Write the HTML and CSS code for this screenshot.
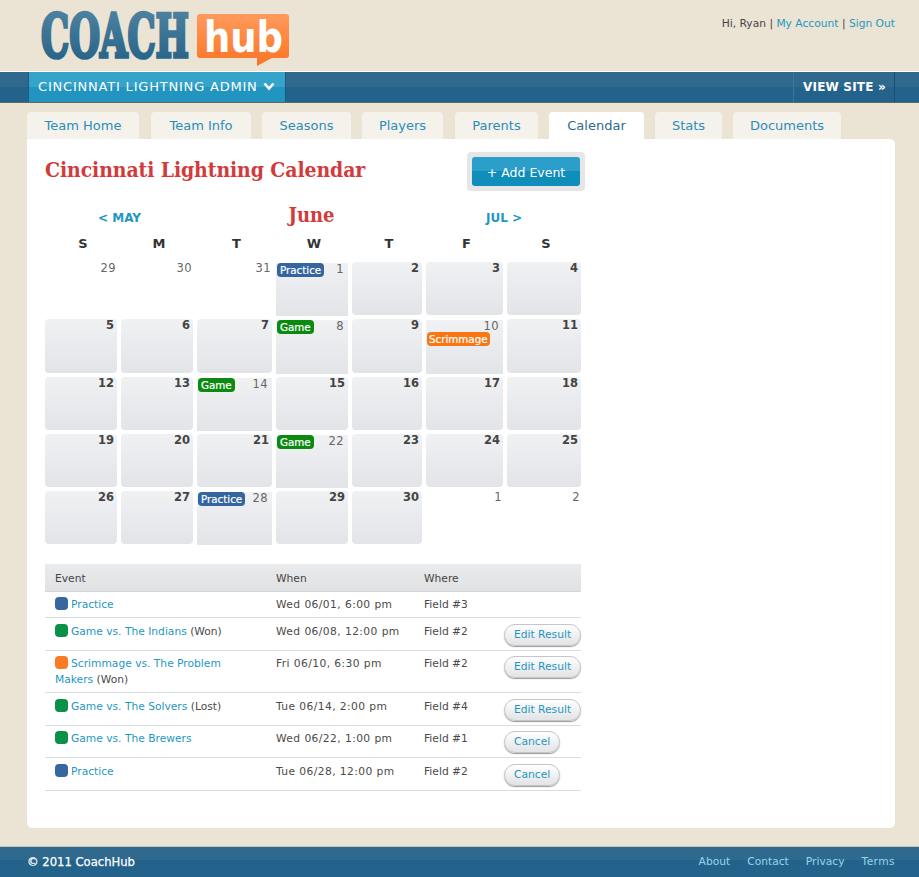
FILE: index.html
```html
<!DOCTYPE html>
<html lang="en">
<head>
<meta charset="utf-8">
<title>Cincinnati Lightning Calendar - CoachHub</title>
<link rel="stylesheet" href="styles.css">
</head>
<body>
<header class="top">
  <a class="logo" href="#" aria-label="CoachHub">
    <svg width="252" height="56" viewBox="0 0 252 56">
      <defs>
        <linearGradient id="coachFill" x1="0" y1="0" x2="0" y2="1">
          <stop offset="0" stop-color="#5586a3"/>
          <stop offset="1" stop-color="#1f5f85"/>
        </linearGradient>
        <linearGradient id="hubFill" x1="0" y1="0" x2="0" y2="1">
          <stop offset="0" stop-color="#ff9a5c"/>
          <stop offset="1" stop-color="#fb7424"/>
        </linearGradient>
      </defs>
      <text class="logo-coach" transform="translate(1 43) scale(.6 1)" fill="url(#coachFill)" stroke="url(#coachFill)">COACH</text>
      <path fill="url(#hubFill)" d="M160 0h86a3 3 0 0 1 3 3v38a3 3 0 0 1-3 3h-14l-15 8v-8h-57a3 3 0 0 1-3-3V3a3 3 0 0 1 3-3z"/>
      <text class="logo-hub" transform="translate(164 38) scale(.88 1)">hub</text>
    </svg>
  </a>
  <div class="account">Hi, Ryan | <a href="#">My Account</a> | <a href="#">Sign Out</a></div>
</header>

<nav class="bar">
  <a class="team-select" href="#">CINCINNATI LIGHTNING ADMIN
    <svg class="chevron" width="12" height="9" viewBox="0 0 12 9"><path d="M1.5 1.5 6 6.5l4.5-5" fill="none" stroke="#fff" stroke-width="2.6"/></svg>
  </a>
  <a class="view-site" href="#">VIEW SITE »</a>
</nav>

<div class="tabs">
  <a class="tab tab-home" href="#">Team Home</a>
  <a class="tab tab-info" href="#">Team Info</a>
  <a class="tab tab-seasons" href="#">Seasons</a>
  <a class="tab tab-players" href="#">Players</a>
  <a class="tab tab-parents" href="#">Parents</a>
  <a class="tab tab-calendar active" href="#">Calendar</a>
  <a class="tab tab-stats" href="#">Stats</a>
  <a class="tab tab-docs" href="#">Documents</a>
</div>

<main class="panel">
  <div class="title-row">
    <h1>Cincinnati Lightning Calendar</h1>
    <div class="add-wrap"><a class="add" href="#">+ Add Event</a></div>
  </div>

  <div class="cal-grid month-row">
    <a class="month-link span2" href="#">&lt; MAY</a>
    <h2 class="span3">June</h2>
    <a class="month-link span2" href="#">JUL &gt;</a>
  </div>
  <div class="cal-grid dow-row">
    <span>S</span><span>M</span><span>T</span><span>W</span><span>T</span><span>F</span><span>S</span>
  </div>
  <div class="cal-grid days">
    <div class="day out">29</div>
    <div class="day out">30</div>
    <div class="day out">31</div>
    <div class="day event"><span class="num">1</span><span class="tag practice">Practice</span></div>
    <div class="day in">2</div>
    <div class="day in">3</div>
    <div class="day in">4</div>

    <div class="day in">5</div>
    <div class="day in">6</div>
    <div class="day in">7</div>
    <div class="day event"><span class="num">8</span><span class="tag game">Game</span></div>
    <div class="day in">9</div>
    <div class="day event"><span class="num">10</span><span class="tag scrim">Scrimmage</span></div>
    <div class="day in">11</div>

    <div class="day in">12</div>
    <div class="day in">13</div>
    <div class="day event"><span class="num">14</span><span class="tag game">Game</span></div>
    <div class="day in">15</div>
    <div class="day in">16</div>
    <div class="day in">17</div>
    <div class="day in">18</div>

    <div class="day in">19</div>
    <div class="day in">20</div>
    <div class="day in">21</div>
    <div class="day event"><span class="num">22</span><span class="tag game">Game</span></div>
    <div class="day in">23</div>
    <div class="day in">24</div>
    <div class="day in">25</div>

    <div class="day in">26</div>
    <div class="day in">27</div>
    <div class="day event"><span class="num">28</span><span class="tag practice">Practice</span></div>
    <div class="day in">29</div>
    <div class="day in">30</div>
    <div class="day out">1</div>
    <div class="day out">2</div>
  </div>

  <table class="events">
    <colgroup><col class="c-event"><col class="c-when"><col class="c-where"><col class="c-act"></colgroup>
    <thead>
      <tr><th>Event</th><th>When</th><th>Where</th><th></th></tr>
    </thead>
    <tbody>
      <tr><td><i class="dot blue"></i><a href="#">Practice</a></td><td>Wed 06/01, 6:00 pm</td><td>Field #3</td><td></td></tr>
      <tr><td><i class="dot green"></i><a href="#">Game vs. The Indians</a> (Won)</td><td>Wed 06/08, 12:00 pm</td><td>Field #2</td><td><a class="btn" href="#">Edit Result</a></td></tr>
      <tr><td><i class="dot orange"></i><a href="#">Scrimmage vs. The Problem Makers</a> (Won)</td><td>Fri 06/10, 6:30 pm</td><td>Field #2</td><td><a class="btn" href="#">Edit Result</a></td></tr>
      <tr><td><i class="dot green"></i><a href="#">Game vs. The Solvers</a> (Lost)</td><td>Tue 06/14, 2:00 pm</td><td>Field #4</td><td><a class="btn" href="#">Edit Result</a></td></tr>
      <tr><td><i class="dot green"></i><a href="#">Game vs. The Brewers</a></td><td>Wed 06/22, 1:00 pm</td><td>Field #1</td><td><a class="btn" href="#">Cancel</a></td></tr>
      <tr><td><i class="dot blue"></i><a href="#">Practice</a></td><td>Tue 06/28, 12:00 pm</td><td>Field #2</td><td><a class="btn" href="#">Cancel</a></td></tr>
    </tbody>
  </table>
</main>

<footer class="foot">
  <span class="copy">© 2011 CoachHub</span>
  <nav class="foot-links"><a href="#">About</a><a href="#">Contact</a><a href="#">Privacy</a><a href="#">Terms</a></nav>
</footer>
</body>
</html>
```
FILE: styles.css
```css
* { box-sizing: border-box; }
html, body { margin: 0; padding: 0; }
body {
  width: 919px;
  height: 877px;
  overflow: hidden;
  background: #ebe4d5;
  color: #4a4a4a;
  font-family: "DejaVu Sans", sans-serif;
  font-size: 10.7px;
}
a { color: #1f97c1; text-decoration: none; }

.top { height: 71px; display: flex; justify-content: space-between; padding: 14px 24px 0 40px; }
.logo { display: block; height: 56px; }
.logo svg { overflow: visible; }
.logo-coach { font-family: "DejaVu Serif", serif; font-weight: 700; font-size: 59px; stroke-width: 3.6px; }
.logo-hub { font-family: "DejaVu Sans", sans-serif; font-weight: 700; font-size: 42px; fill: #fff; }
.account { font-size: 10.7px; line-height: 18px; padding-top: 1px; color: #444; }

.bar {
  height: 32px;
  border-top: 1px solid #fff;
  border-bottom: 1px solid #5c6a66;
  background: linear-gradient(#2f6a8e 0, #2f6a8e 50%, #23628a 50%, #23628a 100%);
  display: flex;
  justify-content: space-between;
  padding: 0 24px 0 28px;
  font-size: 13px;
  line-height: 30px;
  letter-spacing: .8px;
}
.team-select {
  width: 258px;
  padding-left: 9px;
  color: #fff;
  background: linear-gradient(#36a3cb 0, #36a3cb 50%, #2194c0 50%, #2194c0 100%);
  border-left: 1px solid #1f5a7c;
  border-right: 1px solid #1f5a7c;
  white-space: nowrap;
}
.chevron { margin-left: 0; }
.view-site {
  width: 102px;
  padding-left: 9px;
  color: #fff;
  font-size: 12px;
  font-weight: 700;
  letter-spacing: .2px;
  border-left: 1px solid #3a7699;
  border-right: 1px solid #1d4f6e;
  white-space: nowrap;
}

.tabs { height: 36px; display: flex; padding: 9px 0 0 27px; }
.tab {
  height: 27px;
  background: #f5f2eb;
  border-radius: 4px 4px 0 0;
  text-align: center;
  font-size: 13px;
  line-height: 27px;
  color: #2a8dba;
  white-space: nowrap;
}
.tab-home { width: 112px; margin-right: 12px; }
.tab-info { width: 100px; margin-right: 11px; }
.tab-seasons { width: 89px; margin-right: 11px; }
.tab-players { width: 81px; margin-right: 12px; }
.tab-parents { width: 83px; margin-right: 11px; }
.tab-calendar { width: 95px; margin-right: 11px; }
.tab-stats { width: 67px; margin-right: 11px; }
.tab-docs { width: 108px; }
.tab.active { background: #fff; color: #2f6a8e; }

.panel {
  width: 868px;
  height: 689px;
  margin-left: 27px;
  background: #fff;
  border-radius: 0 5px 5px 5px;
  padding: 13px 0 0 18px;
}
.title-row { width: 540px; height: 39px; display: flex; justify-content: space-between; align-items: flex-start; }
h1 {
  margin: 0;
  padding-top: 4px;
  font-family: "DejaVu Serif Condensed", "DejaVu Serif", serif;
  font-weight: 700;
  font-size: 21px;
  line-height: 27px;
  letter-spacing: -.1px;
  color: #d23b3b;
  white-space: nowrap;
}
.add-wrap { background: #e6e6e6; border-radius: 4px; padding: 5px; height: 39px; }
.add {
  display: block;
  width: 108px;
  height: 29px;
  border-radius: 3px;
  background: linear-gradient(#2b9fc9 0, #2b9fc9 50%, #0f8dbb 50%, #0f8dbb 100%);
  color: #fff;
  text-align: center;
  font-size: 12.5px;
  line-height: 31px;
}

.cal-grid {
  width: 536px;
  display: grid;
  grid-template-columns: 72px 72px 75px 72px 70px 77px 74px;
  column-gap: 4px;
}
.month-row { height: 28px; margin-top: 10px; align-items: center; text-align: center; }
.span2 { grid-column: span 2; }
.span3 { grid-column: span 3; padding-left: 4px; }
.month-link { font-size: 12px; font-weight: 700; padding-top: 6px; padding-left: 1px; }
h2 {
  margin: 0;
  font-family: "DejaVu Serif Condensed", "DejaVu Serif", serif;
  font-size: 20px;
  font-weight: 700;
  color: #d23b3b;
}
.dow-row { height: 33px; padding: 7px 0 0 2px; text-align: center; font-size: 13px; font-weight: 700; color: #333; }
.days { grid-auto-rows: 53.25px; row-gap: 4px; }

.day { font-size: 11.5px; line-height: 13px; text-align: right; }
.in, .event { background: linear-gradient(#f0f1f3, #e2e4e8); }
.in { border-radius: 4px; padding: 0 3px; font-weight: 700; color: #444; }
.out { padding: 0 1px 0 0; color: #666; letter-spacing: .4px; }
.event { margin: 1px 0 -1px; padding: 0 4px 0 1px; color: #666; letter-spacing: .4px; text-align: left; }
.num { float: right; line-height: 12px; }
.tag {
  display: inline-block;
  height: 14px;
  padding: 0 3px;
  border-radius: 4px;
  color: #fff;
  font-size: 10.3px;
  line-height: 14px;
  font-weight: 400;
  letter-spacing: 0;
  vertical-align: top;
  -webkit-text-stroke: .2px #fff;
}
.practice { background: #34659f; }
.game { background: #0b8a10; }
.scrim { background: #f97712; padding: 0 2px; }

.events { width: 536px; margin-top: 19.75px; border-collapse: collapse; table-layout: fixed; font-size: 10.7px; line-height: 16px; }
.c-event { width: 221px; }
.c-when { width: 148px; }
.c-where { width: 80px; }
.c-act { width: 87px; }
th {
  height: 27px;
  padding: 3px 0 0 10px;
  background: linear-gradient(#eaebec, #e0e1e3);
  border-bottom: 1px solid #d3d5d8;
  text-align: left;
  font-weight: 400;
  color: #444;
}
td {
  padding: 5.5px 0 4px 10px;
  border-bottom: 1px solid #d9dce0;
  vertical-align: top;
}
td:first-child { padding-right: 28px; }
td:nth-child(2) { letter-spacing: .42px; }
.dot { display: inline-block; width: 13px; height: 13px; border-radius: 4px; margin-right: 3px; vertical-align: -2px; }
.blue { background: #38669f; }
.green { background: #0a9147; }
.orange { background: #fb7a24; }
.btn {
  display: inline-block;
  height: 22px;
  padding: 0 9px;
  border: 1px solid #c4c6c8;
  border-radius: 11px;
  background: linear-gradient(#fff, #e2e3e5);
  box-shadow: 0 1px 1px #999;
  line-height: 19px;
  vertical-align: top;
  white-space: nowrap;
}

.foot {
  height: 31px;
  margin-top: 18px;
  border-top: 1px solid #c9c3b2;
  background: linear-gradient(#2f6a8e 0, #2f6a8e 45%, #23628a 45%, #23628a 100%);
  display: flex;
  justify-content: space-between;
  padding: 0 24px 0 27px;
  line-height: 29px;
}
.copy { color: #fff; font-size: 11.6px; font-weight: 400; line-height: 31px; -webkit-text-stroke: .25px #fff; }
.foot-links { display: flex; gap: 17px; }
.foot-links a { color: #96d6ec; font-size: 10.7px; }
.foot-links a:last-child { letter-spacing: .4px; }
```
